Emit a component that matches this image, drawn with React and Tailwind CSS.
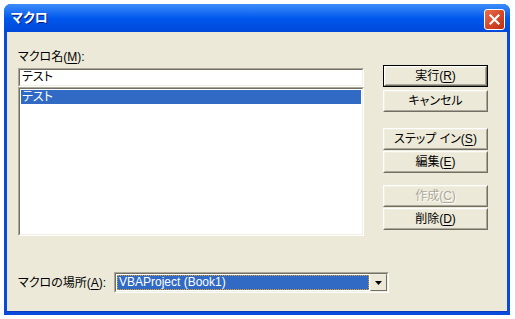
import React from 'react';

const Btn = ({ children, def, disabled, className = '' }) => (
  <div className={`h-[22px] w-[105px] ${def ? 'border border-black' : ''} ${className}`}>
    <div className="h-full border border-t-white border-l-white border-r-[#716F64] border-b-[#716F64]">
      <div
        className={`h-full flex items-center justify-center border border-t-[#F1EFE2] border-l-[#F1EFE2] border-r-[#ACA899] border-b-[#ACA899] text-[12px] leading-none ${
          disabled ? 'text-[#ACA899] [text-shadow:1px_1px_0_#ffffff]' : 'text-black'
        }`}
      >
        {children}
      </div>
    </div>
  </div>
);

const Sunken = ({ children, className = '' }) => (
  <div className={`border border-t-[#ACA899] border-l-[#ACA899] border-r-white border-b-white ${className}`}>
    <div className="h-full border border-t-[#716F64] border-l-[#716F64] border-r-[#F1EFE2] border-b-[#F1EFE2] bg-white">
      {children}
    </div>
  </div>
);

const U = ({ children }) => <span className="underline underline-offset-2">{children}</span>;

export default function App() {
  return (
    <div className="w-[515px] h-[319px] bg-white pt-[4px] pl-[4px] font-['Liberation_Sans','Noto_Sans_CJK_JP',sans-serif] [font-feature-settings:'palt']">
      <div className="w-[506px] h-[311px] flex flex-col rounded-t-[7px] bg-[#0A4BDC]">
        {/* title bar */}
        <div className="h-[28px] flex justify-between rounded-t-[7px] bg-gradient-to-b from-[#3C8CF8] via-[#0058EE] to-[#0048D8] pl-[7px] pr-[5px]">
          <div className="pt-[7px] text-white font-bold text-[13px] leading-[14px] [text-shadow:1px_1px_0_#0A1E7A]">マクロ</div>
          <div className="mt-[5px] w-[21px] h-[21px] rounded-[3px] border border-white bg-gradient-to-br from-[#E8704F] via-[#D8492A] to-[#B8300F] flex items-center justify-center">
            <svg width="11" height="11" viewBox="0 0 11 11">
              <path d="M1.5 1.5 L9.5 9.5 M9.5 1.5 L1.5 9.5" stroke="white" strokeWidth="2.2" strokeLinecap="square" />
            </svg>
          </div>
        </div>

        {/* body */}
        <div className="flex-1 mx-[3px] mb-[3px] bg-[#ECE9D8] flex flex-col border-b border-[#0A3BBF]">
          <div className="flex">
            <div className="ml-[11px] w-[346px] flex flex-col">
              <div className="mt-[18px] h-[14px] text-[12px] leading-[14px] text-black">
                マクロ名(<U>M</U>):
              </div>
              <Sunken className="mt-[4px] h-[19px]">
                <div className="pl-[2px] text-[12px] leading-[15px] text-black">テスト</div>
              </Sunken>
              <Sunken className="h-[149px]">
                <div className="mt-[1px] mx-[1px] h-[14px] bg-[#316AC5] text-white text-[12px] leading-[14px] pl-[1px]">テスト</div>
              </Sunken>
            </div>
            <div className="ml-[19px] flex flex-col pt-[33px]">
              <Btn def>実行(<U>R</U>)</Btn>
              <Btn className="mt-[3px]">キャンセル</Btn>
              <Btn className="mt-[16px]">ステップ イン(<U>S</U>)</Btn>
              <Btn className="mt-[1px]">編集(<U>E</U>)</Btn>
              <Btn disabled className="mt-[12px]">作成(<U>C</U>)</Btn>
              <Btn className="mt-[1px]">削除(<U>D</U>)</Btn>
            </div>
          </div>

          <div className="mt-[36px] flex items-center">
            <div className="ml-[11px] w-[96px] text-[12px] leading-[14px] text-black">
              マクロの場所(<U>A</U>):
            </div>
            <Sunken className="w-[275px] h-[21px]">
              <div className="h-full flex">
                <div className="flex-1 m-[1px] bg-[#316AC5] border border-dotted border-[#E0A030] text-white text-[12px] leading-[13px] pl-[1px]">
                  VBAProject (Book1)
                </div>
                <div className="w-[17px] h-full border border-t-[#F1EFE2] border-l-[#F1EFE2] border-r-[#716F64] border-b-[#716F64] bg-[#ECE9D8] flex items-center justify-center">
                  <svg width="7" height="4" viewBox="0 0 7 4">
                    <path d="M0 0 H7 L3.5 4 Z" fill="black" />
                  </svg>
                </div>
              </div>
            </Sunken>
          </div>
        </div>
      </div>
    </div>
  );
}
